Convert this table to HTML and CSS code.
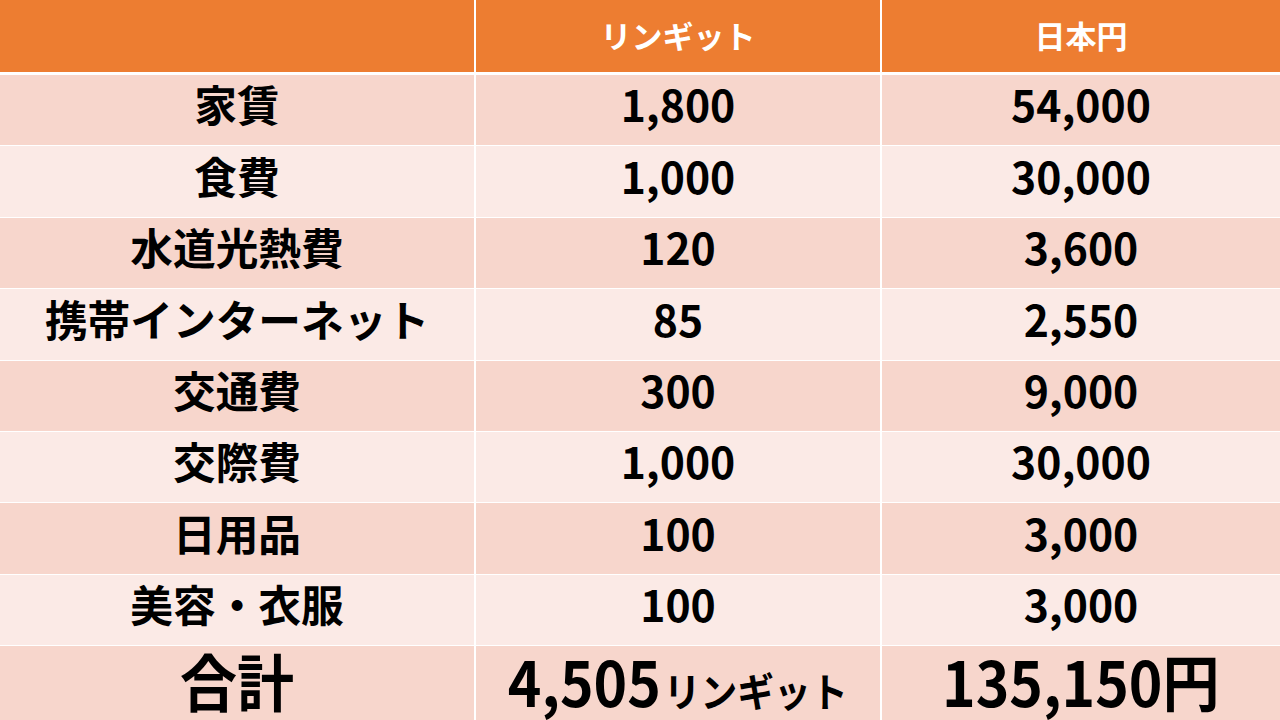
FILE: index.html
```html
<!DOCTYPE html>
<html lang="ja">
<head>
<meta charset="utf-8">
<link rel="stylesheet" href="styles.css">
</head>
<body>
<div class="table">
  <div class="cell head"></div>
  <div class="cell head">リンギット</div>
  <div class="cell head">日本円</div>

  <div class="cell dark">家賃</div>
  <div class="cell dark">1,800</div>
  <div class="cell dark">54,000</div>

  <div class="cell light">食費</div>
  <div class="cell light">1,000</div>
  <div class="cell light">30,000</div>

  <div class="cell dark">水道光熱費</div>
  <div class="cell dark">120</div>
  <div class="cell dark">3,600</div>

  <div class="cell light">携帯インターネット</div>
  <div class="cell light">85</div>
  <div class="cell light">2,550</div>

  <div class="cell dark">交通費</div>
  <div class="cell dark">300</div>
  <div class="cell dark">9,000</div>

  <div class="cell light">交際費</div>
  <div class="cell light">1,000</div>
  <div class="cell light">30,000</div>

  <div class="cell dark">日用品</div>
  <div class="cell dark">100</div>
  <div class="cell dark">3,000</div>

  <div class="cell light">美容・衣服</div>
  <div class="cell light">100</div>
  <div class="cell light">3,000</div>

  <div class="cell dark total"><span class="narrow">合計</span></div>
  <div class="cell dark total"><span class="narrow">4,505<small class="unit">リンギット</small></span></div>
  <div class="cell dark total"><span class="narrow">135,150円</span></div>
</div>
</body>
</html>
```

FILE: styles.css
```css
html, body {
  margin: 0;
  padding: 0;
  width: 1280px;
  height: 720px;
  overflow: hidden;
  background: #ffffff;
}

.table {
  display: grid;
  grid-template-columns: 474px 404px 1fr;
  grid-template-rows: 74px repeat(8, 70.4px) 1fr;
  column-gap: 2px;
  row-gap: 1px;
  width: 1280px;
  height: 720px;
  background: #ffffff;
  font-family: "Noto Sans CJK JP", "Noto Sans", sans-serif;
  font-weight: 700;
}

.cell {
  display: flex;
  align-items: center;
  justify-content: center;
  color: #000000;
  font-size: 42.7px;
  line-height: 1;
  padding-bottom: 13px;
  box-sizing: border-box;
}

.head {
  background: #ED7D31;
  color: #ffffff;
  font-size: 31px;
  margin-bottom: 2.5px;
  padding-bottom: 2px;
}

.dark {
  background: #F7D6CC;
}

.light {
  background: #FBEAE6;
}

.total {
  font-size: 62px;
  line-height: 62px;
  padding-bottom: 6px;
}

.narrow {
  display: inline-block;
  transform: scaleX(0.92);
  white-space: nowrap;
  line-height: 62px;
}

.unit {
  font-size: 40px;
  line-height: 40px;
  margin-left: 3px;
}
```
